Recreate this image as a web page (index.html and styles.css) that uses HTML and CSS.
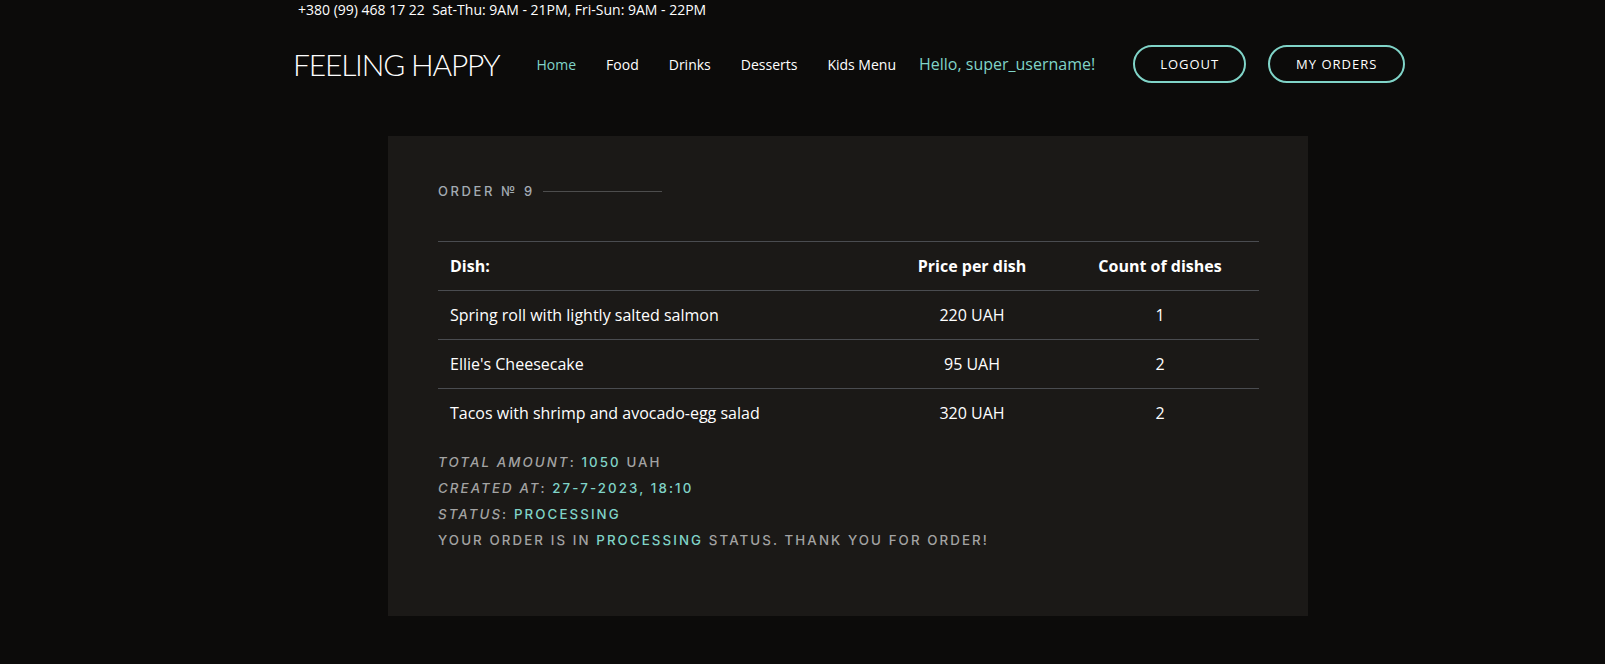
FILE: index.html
```html
<!DOCTYPE html>
<html lang="en">
<head>
<meta charset="utf-8">
<title>Feeling Happy - Order</title>
<link rel="stylesheet" href="styles.css">
</head>
<body>
<div class="topbar">+380 (99) 468 17 22&nbsp; Sat-Thu: 9AM - 21PM, Fri-Sun: 9AM - 22PM</div>
<header class="header">
  <div class="logo">FEELING HAPPY</div>
  <nav class="nav">
    <a class="nav-link active" href="#">Home</a>
    <a class="nav-link" href="#">Food</a>
    <a class="nav-link" href="#">Drinks</a>
    <a class="nav-link" href="#">Desserts</a>
    <a class="nav-link" href="#">Kids Menu</a>
  </nav>
  <span class="hello">Hello, super_username!</span>
  <a class="btn btn-logout" href="#">LOGOUT</a>
  <a class="btn btn-orders" href="#">MY ORDERS</a>
</header>
<main class="card">
  <div class="order-title"><span>ORDER № 9</span><span class="title-line"></span></div>
  <table class="order-table">
    <colgroup><col class="c1"><col class="c2"><col class="c3"></colgroup>
    <thead>
      <tr><th class="left">Dish:</th><th>Price per dish</th><th>Count of dishes</th></tr>
    </thead>
    <tbody>
      <tr><td class="left">Spring roll with lightly salted salmon</td><td>220 UAH</td><td>1</td></tr>
      <tr><td class="left">Ellie's Cheesecake</td><td>95 UAH</td><td>2</td></tr>
      <tr><td class="left">Tacos with shrimp and avocado-egg salad</td><td>320 UAH</td><td>2</td></tr>
    </tbody>
  </table>
  <div class="summary">
    <p><em>TOTAL AMOUNT</em>: <span class="hl">1050</span> UAH</p>
    <p><em>CREATED AT</em>: <span class="hl">27-7-2023, 18:10</span></p>
    <p><em>STATUS</em>: <span class="hl">PROCESSING</span></p>
    <p>YOUR ORDER IS IN <span class="hl">PROCESSING</span> STATUS. THANK YOU FOR ORDER!</p>
  </div>
</main>
</body>
</html>
```
FILE: styles.css
```css
html, body {
  margin: 0;
  padding: 0;
  background: #0c0b0a;
  color: #fff;
  font-family: "Open Sans", "Liberation Sans", sans-serif;
}
.topbar {
  padding-left: 298px;
  height: 20px;
  line-height: 20px;
  font-size: 14px;
  color: #fff;
}
.header {
  display: flex;
  align-items: center;
  height: 38px;
  margin-top: 25px;
  padding-left: 293px;
}
.logo {
  font-family: "Lato", sans-serif;
  font-weight: 300;
  font-size: 30px;
  letter-spacing: -1.2px;
  color: #fff;
  margin-right: 22px;
}
.nav {
  display: flex;
}
.nav-link {
  color: #fff;
  text-decoration: none;
  font-size: 14px;
  padding: 0 15px;
}
.nav-link.active {
  color: #80d4c8;
}
.hello {
  color: #80d4c8;
  font-size: 16px;
  margin-left: 8px;
  margin-right: 38px;
}
.btn {
  box-sizing: border-box;
  height: 38px;
  border: 2px solid #80d4c8;
  border-radius: 19px;
  color: #fff;
  text-decoration: none;
  font-size: 13px;
  font-weight: 500;
  letter-spacing: 1px;
  display: flex;
  align-items: center;
  justify-content: center;
}
.btn-logout { width: 113px; margin-right: 22px; }
.btn-orders { width: 137px; }
.card {
  display: block;
  box-sizing: border-box;
  width: 920px;
  margin: 53px 0 0 388px;
  background: #1b1917;
  padding: 45px 49px 63px 50px;
}
.order-title {
  display: flex;
  align-items: center;
  height: 20px;
  font-family: "Inter", sans-serif;
  font-size: 13px;
  font-weight: 500;
  letter-spacing: 2.6px;
  color: #a3abb3;
}
.title-line {
  display: block;
  width: 119px;
  height: 1px;
  background: #4d4d4d;
  margin-left: 8px;
}
.order-table {
  margin-top: 40px;
  width: 821px;
  border-collapse: collapse;
  table-layout: fixed;
  font-size: 16px;
}
.c1 { width: 445px; }
.c2 { width: 178px; }
.c3 { width: 198px; }
.order-table th, .order-table td {
  height: 48px;
  padding: 0 12px;
  text-align: center;
  border-top: 1px solid #4a4c50;
  color: #fff;
}
.order-table th { font-weight: 700; }
.order-table td { font-weight: 400; }
.order-table .left { text-align: left; }
.summary {
  margin-top: 12px;
  font-family: "Inter", sans-serif;
  font-size: 13.3px;
  font-weight: 500;
  letter-spacing: 2.1px;
  color: #a3a3a3;
}
.summary p {
  margin: 0;
  line-height: 26px;
  height: 26px;
}
.summary em { font-style: italic; }
.summary .hl { color: #80d4c8; }
```
